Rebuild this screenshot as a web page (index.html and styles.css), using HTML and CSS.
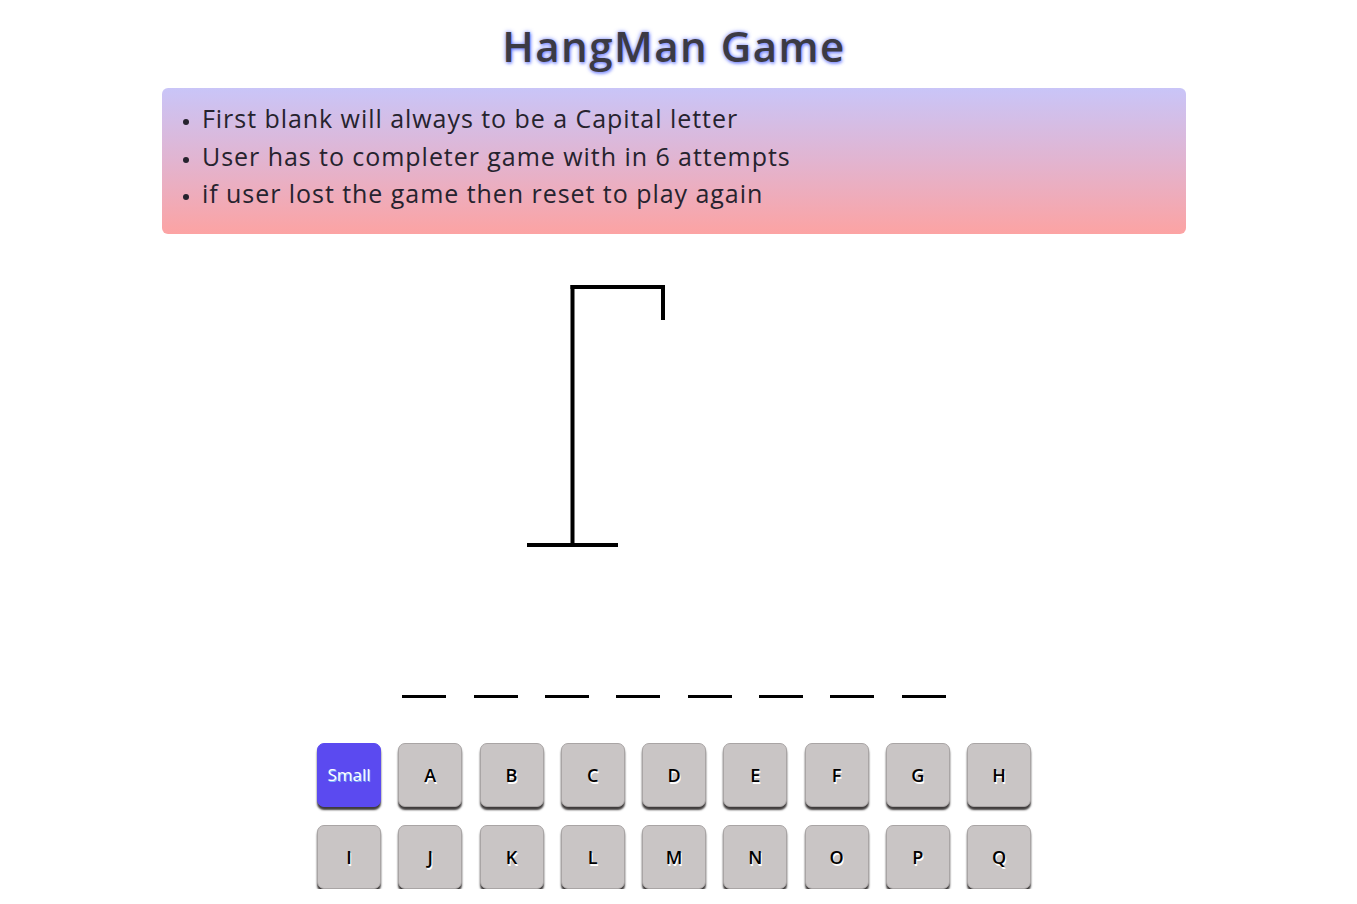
FILE: index.html
```html
<!DOCTYPE html>
<html lang="en">
<head>
<meta charset="utf-8">
<title>HangMan Game</title>
<link rel="stylesheet" href="styles.css">
</head>
<body>
<div class="app">
  <h1 class="title">HangMan Game</h1>
  <div class="rules">
    <ul>
      <li>First blank will always to be a Capital letter</li>
      <li>User has to completer game with in 6 attempts</li>
      <li>if user lost the game then reset to play again</li>
    </ul>
  </div>
  <svg class="gallows" width="1024" height="400" viewBox="0 0 1024 400" xmlns="http://www.w3.org/2000/svg">
    <g stroke="#000" stroke-width="4" fill="none" stroke-linecap="butt">
      <line x1="410.5" y1="31" x2="410.5" y2="291"/>
      <line x1="408.5" y1="33" x2="503" y2="33"/>
      <line x1="501" y1="31" x2="501" y2="66"/>
      <line x1="365" y1="291" x2="456" y2="291"/>
    </g>
  </svg>
  <div class="blanks">
    <span class="blank"></span><span class="blank"></span><span class="blank"></span><span class="blank"></span><span class="blank"></span><span class="blank"></span><span class="blank"></span><span class="blank"></span>
  </div>
  <div class="keys">
    <button class="key key-small">Small</button>
    <button class="key">A</button>
    <button class="key">B</button>
    <button class="key">C</button>
    <button class="key">D</button>
    <button class="key">E</button>
    <button class="key">F</button>
    <button class="key">G</button>
    <button class="key">H</button>
    <button class="key">I</button>
    <button class="key">J</button>
    <button class="key">K</button>
    <button class="key">L</button>
    <button class="key">M</button>
    <button class="key">N</button>
    <button class="key">O</button>
    <button class="key">P</button>
    <button class="key">Q</button>
  </div>
</div>
</body>
</html>
```
FILE: styles.css
```css
html, body {
  margin: 0;
  padding: 0;
  background: #fff;
}
body {
  font-family: "Open Sans", "Noto Sans", sans-serif;
  color: #26232e;
  overflow: hidden;
}
.app {
  width: 1348px;
  display: flex;
  flex-direction: column;
  align-items: center;
}
.title {
  margin: 22px 0 18px;
  font-size: 42px;
  line-height: 48px;
  font-weight: 600;
  color: #3b3a44;
  letter-spacing: 1.5px;
  text-shadow: 0 0 4px rgba(70, 90, 255, 0.8), 1px 2px 3px rgba(80, 100, 255, 0.45);
}
.rules {
  width: 1024px;
  box-sizing: border-box;
  padding: 12px 0 21px;
  border-radius: 6px;
  background: linear-gradient(to bottom, #c9c5f8 0%, #e2b4d0 50%, #fca3a3 100%);
}
.rules ul {
  margin: 0;
  padding-left: 40px;
  font-size: 25px;
  line-height: 37.5px;
  letter-spacing: 0.95px;
}
.rules li::marker {
  font-size: 17px;
}
.gallows {
  display: block;
  margin-top: 20px;
}
.blanks {
  display: flex;
  gap: 27.3px;
  margin-top: 41px;
}
.blank {
  display: block;
  width: 44px;
  height: 3px;
  background: #000;
}
.keys {
  display: grid;
  grid-template-columns: repeat(9, 64px);
  column-gap: 17.25px;
  row-gap: 18px;
  margin-top: 45px;
}
.key {
  width: 64px;
  height: 64px;
  box-sizing: border-box;
  border: 1px solid #a9a5a5;
  border-radius: 7px;
  background: #c9c5c5;
  box-shadow: 0 3px 2px #3f3c3c;
  font-family: "Open Sans", "Noto Sans", sans-serif;
  font-size: 18px;
  font-weight: 600;
  color: #000;
  text-shadow: 1px 2px 0 #fff;
  padding: 0;
  cursor: pointer;
}
.key-small {
  background: #5b4af0;
  border-color: #5b4af0;
  color: #fff;
  font-size: 17px;
  font-weight: 500;
  text-shadow: 1px 1px 0 rgba(142, 233, 255, 0.7);
}
```
